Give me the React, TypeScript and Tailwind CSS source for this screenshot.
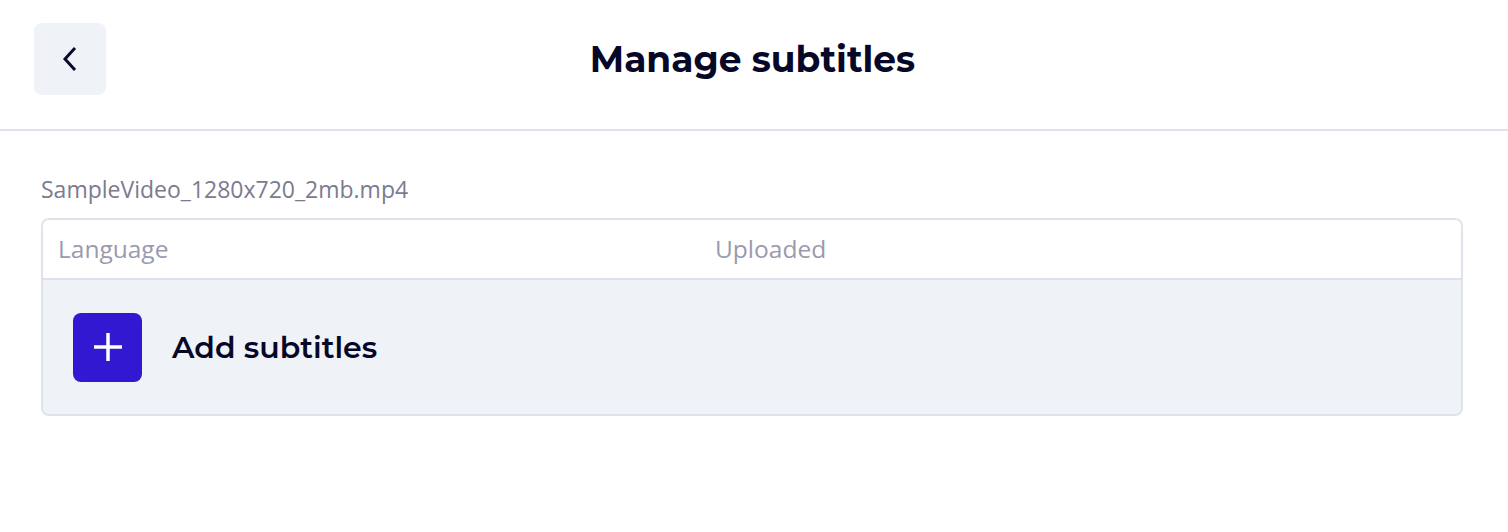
export default function App() {
  return (
    <div className="w-[1508px] h-[532px] bg-white font-['Open_Sans',sans-serif]">
      <div className="h-[131px] border-b-2 border-[#dfe2ea] flex items-center px-[34px] relative">
        <button className="w-[72px] h-[72px] rounded-lg bg-[#eff2f7] flex items-center justify-center -mt-[11px]">
          <svg width="18" height="26" viewBox="0 0 18 26" fill="none" stroke="#0a0a2e" strokeWidth="3" strokeLinecap="square">
            <polyline points="13,3 4,13 13,23" />
          </svg>
        </button>
        <h1 className="absolute left-0 right-0 text-center -mt-[11px] pr-[3px] text-[36px] font-bold text-[#070728] font-['Montserrat','Open_Sans',sans-serif] pointer-events-none">
          Manage subtitles
        </h1>
      </div>

      <div className="px-[41px] pt-[43px]">
        <p className="text-[23px] text-[#7b7b8f] leading-[30px] mb-[14px]">SampleVideo_1280x720_2mb.mp4</p>
        <div className="w-[1422px] rounded-lg border-2 border-[#dfe2ea] overflow-hidden">
          <div className="h-[60px] flex items-center px-[15px] text-[24.5px] text-[#9a9aae] border-b-2 border-[#dfe2ea] bg-white">
            <span className="w-[657px]">Language</span>
            <span>Uploaded</span>
          </div>
          <div className="h-[134px] bg-[#eff2f7] flex items-center px-[30px]">
            <div className="w-[69px] h-[69px] rounded-lg bg-[#3119d1] flex items-center justify-center">
              <svg width="30" height="30" viewBox="0 0 30 30" fill="none" stroke="white" strokeWidth="3.5">
                <line x1="15" y1="1" x2="15" y2="29" />
                <line x1="1" y1="15" x2="29" y2="15" />
              </svg>
            </div>
            <span className="ml-[30px] text-[30px] font-semibold text-[#070728] font-['Montserrat','Open_Sans',sans-serif]">Add subtitles</span>
          </div>
        </div>
      </div>
    </div>
  );
}
